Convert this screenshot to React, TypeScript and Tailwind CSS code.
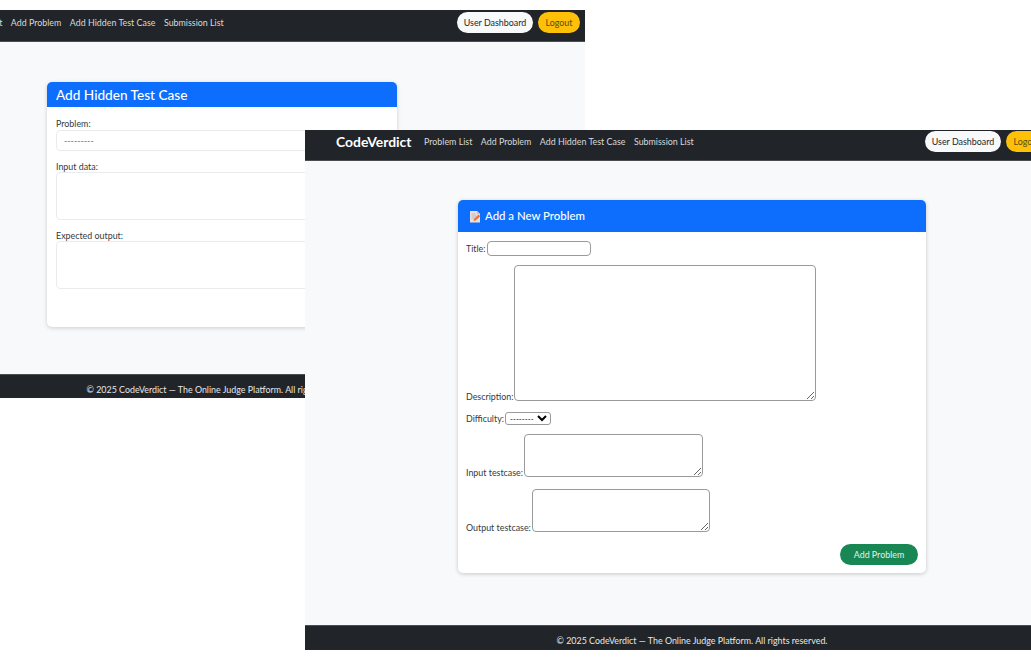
import type { ReactNode } from "react";

const font = "font-['Lato','Liberation_Sans',sans-serif]";

function Navbar({ className }: { className: string }) {
  return (
    <nav className={`flex items-start bg-[#212529] border-b border-[#4a4e52] ${className}`}>
      <span className="text-white font-bold text-[13.900px] leading-[21px] w-[88px] shrink-0">CodeVerdict</span>
      <div className="flex gap-[8.500px] text-[8.900px] leading-[21px] text-[#d8d9da] whitespace-nowrap">
        <a>Problem List</a>
        <a>Add Problem</a>
        <a>Add Hidden Test Case</a>
        <a>Submission List</a>
      </div>
      <div className="ml-auto flex items-center gap-[5px] text-[8.900px]">
        <a className="h-[21px] w-[76px] rounded-full bg-[#f8f9fa] text-[#212529] flex items-center justify-center">User Dashboard</a>
        <a className="h-[21px] w-[42px] rounded-full bg-[#ffc107] text-[#5c4a10] flex items-center justify-center">Logout</a>
      </div>
    </nav>
  );
}

function Footer({ className }: { className: string }) {
  return (
    <footer className={`bg-[#212529] border-t border-[#4a4e52] text-[#e6e7e8] text-[8.900px] leading-[13px] pt-[8px] text-center whitespace-nowrap ${className}`}>
      © 2025 CodeVerdict — The Online Judge Platform. All rights reserved.
    </footer>
  );
}

function Row({ label, children, className }: { label: string; children: ReactNode; className: string }) {
  return (
    <div className={`flex gap-[1px] ${className}`}>
      <label className="text-[8.900px] leading-[9px] text-[#343a40] whitespace-nowrap">{label}</label>
      {children}
    </div>
  );
}

const plainBox = "block bg-white border border-[#9a9a9a] rounded-[4px] outline-none";

function Memo() {
  return (
    <svg width="12" height="13" viewBox="0 0 12 13" className="shrink-0">
      <path d="M1 1h7l3 3v8.500H1z" fill="#eadfe0" />
      <path d="M8 1l3 3H8z" fill="#cdbcc0" />
      <path d="M2.500 4h4M2.500 6h5M2.500 8h3" stroke="#b9a9b0" strokeWidth="0.8" />
      <path d="M4.500 11l.6-2.300 4.500-4.200 1.700 1.700-4.500 4.200z" fill="#f0743a" />
    </svg>
  );
}

export default function App() {
  return (
    <div className={`relative w-[1031px] h-[662px] overflow-hidden bg-white ${font}`}>
      {/* first screenshot, behind */}
      <section className="absolute left-[-141px] top-[10px] w-[726px] h-[388px] flex flex-col bg-[#f8f9fa]">
        <Navbar className="h-[32px] pt-[2px] pl-[7px] pr-[5px]" />
        <main className="flex-1 pt-[40px]">
          <div className="mx-auto w-[350px] h-[245px] bg-white rounded-[5px] shadow-[0_1px_4px_rgba(0,0,0,0.18)] overflow-hidden">
            <h2 className="h-[25px] pt-[2px] bg-[#0d6efd] text-white text-[13.600px] font-medium flex items-center px-[9px]">Add Hidden Test Case</h2>
            <div className="px-[9px] pt-[10px] text-[8.900px] leading-[13px] text-[#343a40]">
              <label className="block h-[13px]">Problem:</label>
              <div className="h-[21px] border border-[#e9ebed] rounded-[4px] px-[7px] flex items-center text-[#6c757d]">---------</div>
              <label className="block h-[12px] mt-[9px]">Input data:</label>
              <div className="h-[48px] border border-[#e9ebed] rounded-[4px]" />
              <label className="block h-[12px] mt-[9px]">Expected output:</label>
              <div className="h-[48px] border border-[#e9ebed] rounded-[4px]" />
            </div>
          </div>
        </main>
        <Footer className="h-[24px]" />
      </section>

      {/* second screenshot, on top */}
      <section className="absolute left-[305px] top-[130px] w-[774px] h-[520px] flex flex-col bg-[#f8f9fa]">
        <Navbar className="h-[31px] pt-[1px] pl-[31px] pr-[31px]" />
        <main className="flex-1 pt-[39px]">
          <div className="mx-auto w-[468px] h-[373px] bg-white rounded-[5px] shadow-[0_1px_4px_rgba(0,0,0,0.2)] overflow-hidden">
            <h2 className="h-[32px] bg-[#0d6efd] text-white text-[11.400px] font-medium flex items-center gap-[4px] px-[11px]">
              <Memo />
              Add a New Problem
            </h2>
            <div className="px-[8px] pt-[9px] flex flex-col">
              <Row label="Title:" className="items-center">
                <input className={`${plainBox} w-[104px] h-[15px]`} />
              </Row>
              <Row label="Description:" className="items-end mt-[9px]">
                <textarea className={`${plainBox} w-[302px] h-[136px]`} />
              </Row>
              <Row label="Difficulty:" className="items-center mt-[11px]">
                <select className="w-[46px] h-[13px] border border-[#9a9a9a] rounded-[3px] bg-white text-[8px] leading-none">
                  <option>---------</option>
                </select>
              </Row>
              <Row label="Input testcase:" className="items-end mt-[9px]">
                <textarea className={`${plainBox} w-[179px] h-[43px]`} />
              </Row>
              <Row label="Output testcase:" className="items-end mt-[12px]">
                <textarea className={`${plainBox} w-[178px] h-[43px]`} />
              </Row>
              <div className="flex justify-end mt-[12px]">
                <button className="h-[21px] w-[78px] rounded-full bg-[#198754] text-[#e3f1ea] text-[8.900px]">Add Problem</button>
              </div>
            </div>
          </div>
        </main>
        <Footer className="h-[25px]" />
      </section>
    </div>
  );
}
